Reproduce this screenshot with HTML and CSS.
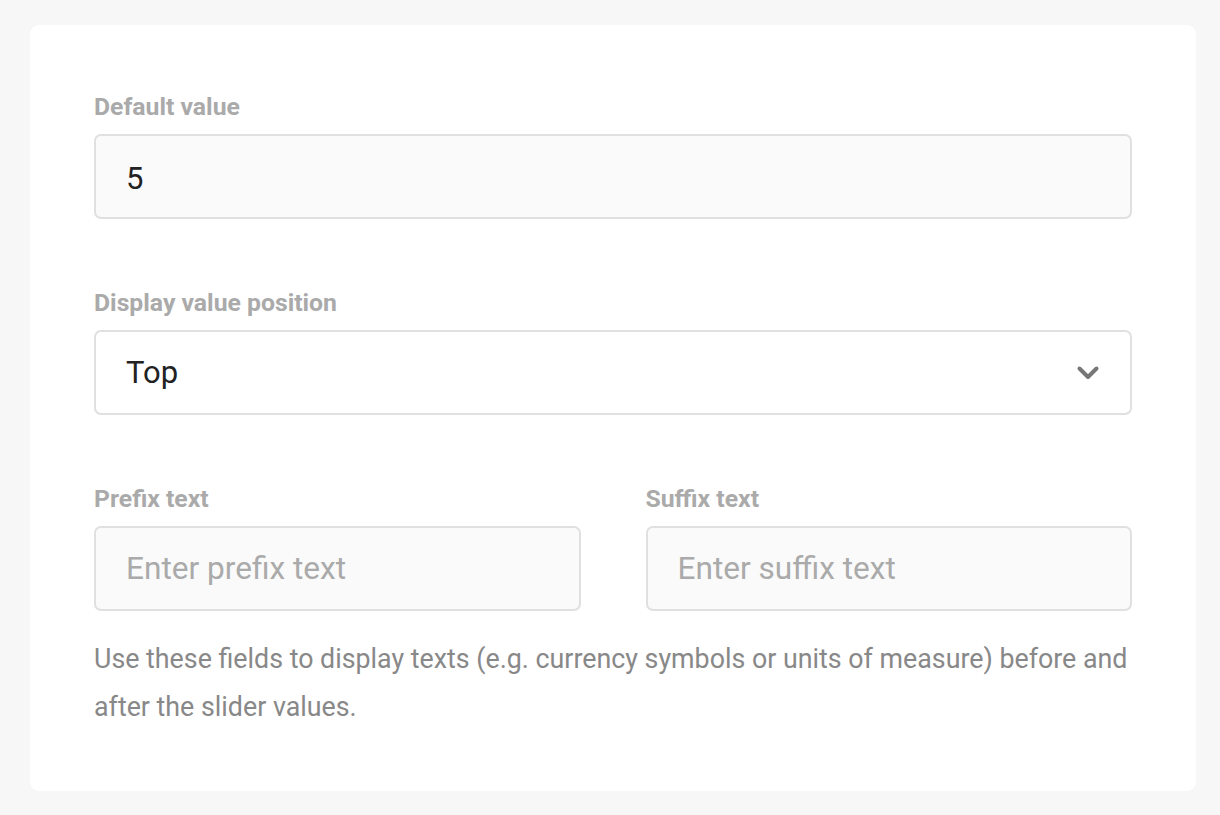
FILE: index.html
```html
<!DOCTYPE html>
<html>
<head>
<meta charset="utf-8">
<link rel="stylesheet" href="styles.css">
</head>
<body>
<div class="card">
  <div class="field">
    <label class="label">Default value</label>
    <div class="input filled">5</div>
  </div>
  <div class="field">
    <label class="label">Display value position</label>
    <div class="input select">
      <span>Top</span>
      <svg class="chev" width="24" height="16" viewBox="0 0 24 16"><path d="M3.5 3.5 L12 12 L20.5 3.5" fill="none" stroke="#777" stroke-width="4" stroke-linecap="round" stroke-linejoin="round"/></svg>
    </div>
  </div>
  <div class="row">
    <div class="field col">
      <label class="label">Prefix text</label>
      <div class="input placeholder">Enter prefix text</div>
    </div>
    <div class="field col">
      <label class="label">Suffix text</label>
      <div class="input placeholder">Enter suffix text</div>
    </div>
  </div>
  <p class="help">Use these fields to display texts (e.g. currency symbols or units of measure) before and after the slider values.</p>
</div>
</body>
</html>
```
FILE: styles.css
```css
html, body {
  margin: 0;
  padding: 0;
  background: #f7f7f7;
  font-family: Roboto, "Liberation Sans", sans-serif;
}
body {
  padding: 25px 24px 24px 30px;
}
.card {
  background: #fff;
  border-radius: 9px;
  width: 1166px;
  height: 766px;
  box-sizing: border-box;
  padding: 68px 64px 0 64px;
}
.field {
  display: flex;
  flex-direction: column;
  margin-bottom: 70px;
}
.label {
  font-size: 24.75px;
  line-height: 27px;
  font-weight: 700;
  color: #aaaaaa;
  margin-bottom: 14px;
}
.input {
  height: 85px;
  box-sizing: border-box;
  border: 2px solid #e0e0e0;
  border-radius: 7px;
  background: #fafafa;
  padding: 0 30px;
  display: flex;
  align-items: center;
  font-size: 31px;
  color: #222;
}
.filled {
  padding-top: 3px;
}
.select {
  background: #fff;
  justify-content: space-between;
  padding-right: 30px;
}
.placeholder {
  color: #aaaaaa;
  font-size: 31.6px;
}
.row {
  display: flex;
  gap: 65px;
}
.col {
  flex: 1;
  margin-bottom: 0;
}
.help {
  margin: 24px 0 0 0;
  font-size: 26.8px;
  line-height: 48px;
  color: #888;
}
```
